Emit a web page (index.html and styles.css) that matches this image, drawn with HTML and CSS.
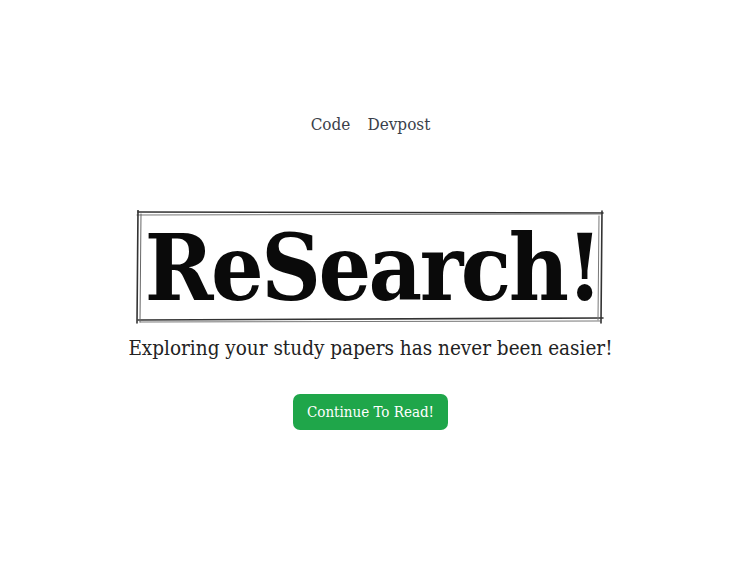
FILE: index.html
```html
<!DOCTYPE html>
<html lang="en">
<head>
<meta charset="utf-8">
<title>ReSearch!</title>
<link rel="stylesheet" href="styles.css">
</head>
<body>
<main class="page">
  <nav class="nav">
    <a class="nav-link" href="#">Code</a>
    <a class="nav-link" href="#">Devpost</a>
  </nav>
  <section class="hero">
    <div class="title-box">
      <svg class="sketch" viewBox="0 0 468 114" preserveAspectRatio="none" aria-hidden="true">
        <g fill="none" stroke="#333" stroke-linecap="round">
          <path d="M2 2 L467 3" stroke-width="1.6"/>
          <path d="M1 5 L465 4" stroke-width="1" stroke="#777"/>
          <path d="M2 110 L467 108" stroke-width="1.6"/>
          <path d="M4 112 L464 111" stroke-width="1" stroke="#777"/>
          <path d="M2 0 L1 113" stroke-width="1.6"/>
          <path d="M5 4 L4 112" stroke-width="1" stroke="#666"/>
          <path d="M466 1 L465 113" stroke-width="1.6"/>
          <path d="M463 6 L462 110" stroke-width="1" stroke="#777"/>
        </g>
      </svg>
      <h1 class="title">ReSearch!</h1>
    </div>
    <p class="tagline">Exploring your study papers has never been easier!</p>
    <a class="cta" href="#">Continue To Read!</a>
  </section>
</main>
</body>
</html>
```
FILE: styles.css
```css
html, body {
  margin: 0;
  padding: 0;
  background: #fff;
}
body {
  font-family: "DejaVu Serif Condensed", "DejaVu Serif", "Liberation Serif", serif;
  font-stretch: condensed;
  color: #1f1f1f;
}
.page {
  display: flex;
  flex-direction: column;
  align-items: center;
  min-height: 573px;
  padding-left: 9px;
}
.nav {
  display: flex;
  gap: 17px;
  margin-top: 112px;
}
.nav-link {
  color: #3b3f4a;
  text-decoration: none;
  font-size: 17px;
  line-height: 24px;
}
.hero {
  display: flex;
  flex-direction: column;
  align-items: center;
  margin-top: 74px;
}
.title-box {
  position: relative;
  width: 468px;
  height: 114px;
  display: flex;
  align-items: center;
  justify-content: center;
}
.sketch {
  position: absolute;
  inset: 0;
  width: 100%;
  height: 100%;
}
.title {
  margin: 2px 0 0 4px;
  font-size: 92px;
  font-weight: bold;
  line-height: 1;
  color: #0a0a0a;
  letter-spacing: -2.5px;
}
.tagline {
  margin: 10px 0 0;
  font-size: 20.5px;
  line-height: 28px;
  color: #222;
}
.cta {
  margin-top: 32px;
  background: #1fa64a;
  color: #fff;
  text-decoration: none;
  font-size: 15px;
  line-height: 36px;
  padding: 0 14px;
  border-radius: 7px;
}
```
